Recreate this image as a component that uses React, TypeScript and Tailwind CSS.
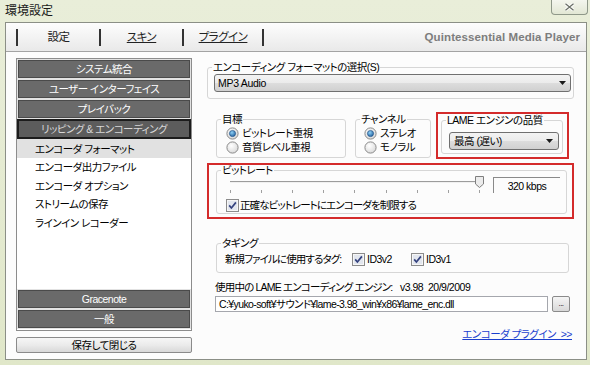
import React from "react";

const Radio = ({ checked }: { checked?: boolean }) => (
  <svg width="13" height="13" viewBox="0 0 13 13" className="shrink-0">
    <defs>
      <radialGradient id={checked ? "rgOn" : "rgOff"} cx="0.4" cy="0.35" r="0.7">
        <stop offset="0" stopColor="#ffffff" />
        <stop offset="1" stopColor="#d8d8d8" />
      </radialGradient>
      <radialGradient id="rdot" cx="0.4" cy="0.35" r="0.7">
        <stop offset="0" stopColor="#8fd0f5" />
        <stop offset="1" stopColor="#1f5f9e" />
      </radialGradient>
    </defs>
    <circle cx="6.5" cy="6.5" r="5.6" fill={checked ? "url(#rgOn)" : "url(#rgOff)"} stroke="#8a8a8a" strokeWidth="1" />
    {checked && <circle cx="6.5" cy="6.5" r="3.1" fill="url(#rdot)" stroke="#1b4a80" strokeWidth="0.6" />}
  </svg>
);

const Check = () => (
  <svg width="13" height="13" viewBox="0 0 13 13" className="shrink-0">
    <rect x="0.5" y="0.5" width="12" height="12" fill="#f6f6f6" stroke="#8c8c8c" />
    <rect x="2" y="2" width="9" height="9" fill="#e2e6ee" />
    <path d="M3.2 6.4 L5.4 9 L9.9 3.4" stroke="#34427e" strokeWidth="1.7" fill="none" />
  </svg>
);

const Arrow = () => (
  <svg width="7" height="4" viewBox="0 0 7 4" className="shrink-0">
    <path d="M0 0 H7 L3.5 4 Z" fill="#1a1a1a" />
  </svg>
);

const NavBtn = ({ label, selected }: { label: string; selected?: boolean }) =>
  selected ? (
    <div className="h-[20px] flex items-center justify-center bg-[#5c5c5c] border-2 border-[#1c1c1c] text-[#d8d8d8]">
      {label}
    </div>
  ) : (
    <div className="h-[20px] flex items-center justify-center bg-[#6a6a6a] border border-[#e2e2e2] shadow-[inset_0_0_0_1px_#4a4a4a] text-white">
      {label}
    </div>
  );

export default function App() {
  const ticks = [0, 31, 62, 93, 124, 156, 187, 218, 249];
  return (
    <div className="w-[590px] h-[365px] overflow-hidden relative whitespace-nowrap bg-[linear-gradient(180deg,#e9eed9_0%,#e0e7c9_100%)] font-['Liberation_Sans','Noto_Sans_CJK_JP',sans-serif] [font-feature-settings:'palt'] text-[10.5px] tracking-[-0.5px] leading-[14px] text-black">
      {/* title bar */}
      <div className="h-[22px] flex items-center pl-[5px] text-[12px] tracking-normal text-[#1a1a1a]">環境設定</div>
      <div className="absolute top-0 right-[2px] w-[37px] h-[15px] border border-t-0 border-[#8f9889] rounded-b-[4px] bg-[linear-gradient(180deg,#f4f6ee,#e2e7d4)] flex items-center justify-center">
        <svg width="11" height="8" viewBox="0 0 11 8">
          <path d="M1.5 0.8 L9.5 7.2 M9.5 0.8 L1.5 7.2" stroke="#ffffff" strokeWidth="3" />
          <path d="M1.5 0.8 L9.5 7.2 M9.5 0.8 L1.5 7.2" stroke="#6a6f66" strokeWidth="1.3" />
        </svg>
      </div>

      {/* main frame */}
      <div className="ml-[5px] w-[582px] h-[338px] border border-[#8b8f86] bg-[#fcfcfc] flex flex-col">
        {/* header */}
        <div className="h-[29px] shrink-0 border-b border-[#a3a3a3] bg-[linear-gradient(180deg,#fdfdfd,#e9e9e9)] flex items-center pl-[10px] pr-[6px]">
          <div className="w-[83px] h-[17px] border-l-2 border-[#333] flex items-center justify-center text-[11.5px] text-[#222]">設定</div>
          <div className="w-[83px] h-[17px] border-l-2 border-[#333] flex items-center justify-center text-[11.5px] text-[#222] underline">スキン</div>
          <div className="w-[82px] h-[17px] border-x-2 border-[#333] flex items-center justify-center text-[11.5px] text-[#222] underline">プラグイン</div>
          <div className="ml-auto text-[11.5px] font-bold text-[#7d7d7d] tracking-[0.1px]">Quintessential Media Player</div>
        </div>

        {/* body */}
        <div className="flex-1 flex pl-[10px]">
          {/* left */}
          <div className="w-[176px] mt-[6px] flex flex-col">
            <div className="h-[273px] border border-[#8c8c8c] bg-white flex flex-col">
              <NavBtn label="システム統合" />
              <NavBtn label="ユーザー インターフェイス" />
              <NavBtn label="プレイバック" />
              <NavBtn label="リッピング & エンコーディング" selected />
              <div className="h-[19px] flex items-center pl-[18px] bg-[#e1e1e1]">エンコーダ フォーマット</div>
              <div className="h-[18.5px] flex items-center pl-[18px]">エンコーダ出力ファイル</div>
              <div className="h-[18.5px] flex items-center pl-[18px]">エンコーダ オプション</div>
              <div className="h-[18.5px] flex items-center pl-[18px]">ストリームの保存</div>
              <div className="h-[18.5px] flex items-center pl-[18px]">ラインイン レコーダー</div>
              <div className="flex-1" />
              <NavBtn label="Gracenote" />
              <NavBtn label="一般" />
              <div className="h-[1px]" />
            </div>
            <div className="mt-[6px] h-[16px] border border-[#8a8a8a] rounded-[2px] bg-[linear-gradient(180deg,#f6f6f6_0%,#ebebeb_50%,#d8d8d8_100%)] flex items-center justify-center">
              保存して閉じる
            </div>
          </div>

          {/* right */}
          <div className="ml-[15px] w-[367px] flex flex-col">
            {/* format */}
            <fieldset className="mt-[8px] w-[367px] border border-[#d6d6d6] rounded-[3px] pl-[4px] pb-[6px]">
              <legend className="px-[1px] leading-[14px]">エンコーディング フォーマットの選択(S)</legend>
              <div className="ml-[2px] w-[357px] h-[18px] border border-[#707070] rounded-[3px] bg-[linear-gradient(180deg,#f3f3f3_0%,#ebebeb_50%,#dddddd_51%,#d0d0d0_100%)] flex items-center pl-[3px] pr-[4px]">
                <span className="flex-1 tracking-[-0.3px]">MP3 Audio</span>
                <Arrow />
              </div>
            </fieldset>

            {/* row 2 */}
            <div className="mt-[13px] ml-[9px] flex items-start">
              <fieldset className="w-[130px] border border-[#d6d6d6] rounded-[3px] pl-[4px] pb-[3px]">
                <legend className="px-[1px] leading-[14px]">目標</legend>
                <div className="h-[14px] flex items-center gap-[3px] ml-[5px]"><Radio checked /><span>ビットレート重視</span></div>
                <div className="h-[14px] flex items-center gap-[3px] ml-[5px]"><Radio /><span>音質レベル重視</span></div>
              </fieldset>
              <fieldset className="ml-[9px] w-[76px] border border-[#d6d6d6] rounded-[3px] pl-[4px] pb-[3px]">
                <legend className="px-[1px] leading-[14px]">チャンネル</legend>
                <div className="h-[14px] flex items-center gap-[3px] ml-[4px]"><Radio checked /><span>ステレオ</span></div>
                <div className="h-[14px] flex items-center gap-[3px] ml-[4px]"><Radio /><span>モノラル</span></div>
              </fieldset>
              <div className="ml-[5px] w-[133px] h-[47px] border-2 border-[#d42b2b]">
                <fieldset className="ml-[3px] w-[122px] border border-[#d6d6d6] rounded-[3px] pl-[4px] pb-[3px]">
                  <legend className="px-[1px] leading-[12px]">LAME エンジンの品質</legend>
                  <div className="mt-[6px] ml-[3px] w-[110px] h-[18px] border border-[#707070] rounded-[3px] bg-[linear-gradient(180deg,#f3f3f3_0%,#ebebeb_50%,#dddddd_51%,#d0d0d0_100%)] flex items-center pl-[4px] pr-[5px]">
                    <span className="flex-1">最高 (遅い)</span>
                    <Arrow />
                  </div>
                </fieldset>
              </div>
            </div>

            {/* bitrate */}
            <div className="mt-[4px] w-[367px] h-[56px] border-2 border-[#d42b2b]">
              <fieldset className="ml-[7px] w-[351px] border border-[#d6d6d6] rounded-[3px] pl-[4px] pb-[1px]">
                <legend className="px-[1px] leading-[10px]">ビットレート</legend>
                <div className="h-[20px] flex items-start">
                  <svg width="256" height="20" viewBox="0 0 256 20" className="ml-[9px] shrink-0">
                    <line x1="0" y1="6.5" x2="252" y2="6.5" stroke="#9c9c9c" />
                    <line x1="0" y1="7.5" x2="252" y2="7.5" stroke="#f0f0f0" />
                    {ticks.map((t) => (
                      <line key={t} x1={t + 0.5} y1="15" x2={t + 0.5} y2="18" stroke="#a0a0a0" />
                    ))}
                    <path d="M245.5 1.5 H253.5 V9 L249.5 12.5 L245.5 9 Z" fill="#ececec" stroke="#7e7e7e" />
                  </svg>
                  <div className="ml-[7px] mt-[2px] w-[67px] h-[16px] border-t border-l border-[#8a8a8a] flex items-center justify-center">320 kbps</div>
                </div>
                <div className="mt-[3px] h-[14px] flex items-center gap-[1px] ml-[5px]"><Check /><span className="tracking-[-0.9px]">正確なビットレートにエンコーダを制限する</span></div>
              </fieldset>
            </div>

            {/* tagging */}
            <fieldset className="mt-[18px] ml-[9px] w-[353px] border border-[#d6d6d6] rounded-[3px] pl-[4px] pb-[6px]">
              <legend className="px-[1px] leading-[12px]">タギング</legend>
              <div className="mt-[3px] h-[14px] flex items-center ml-[4px]">
                <span className="w-[127px] shrink-0 tracking-[-0.9px]">新規ファイルに使用するタグ:</span>
                <div className="w-[59px] flex items-center gap-[2px]"><Check /><span>ID3v2</span></div>
                <div className="flex items-center gap-[2px]"><Check /><span>ID3v1</span></div>
              </div>
            </fieldset>

            {/* engine */}
            <div className="mt-[8px] ml-[8px] h-[12px] flex items-center">
              <span className="w-[185px] shrink-0 tracking-[-0.8px]">使用中の LAME エンコーディング エンジン:</span>
              <span className="whitespace-pre">v3.98  20/9/2009</span>
            </div>
            <div className="mt-[3px] ml-[8px] flex items-center">
              <div className="w-[333px] h-[16px] border border-[#a5a7ad] bg-white flex items-center pl-[3px] tracking-[-0.6px]">
                C:¥yuko-soft¥サウンド¥lame-3.98_win¥x86¥lame_enc.dll
              </div>
              <div className="ml-[4px] w-[18px] h-[16px] border border-[#8a8a8a] rounded-[2px] bg-[linear-gradient(180deg,#f5f5f5,#d8d8d8)] flex items-end justify-center text-[8px] leading-[10px] pb-[2px]">...</div>
            </div>
            <div className="mt-[15px] pr-[2px] flex justify-end">
              <span className="text-[#1b3fce] underline whitespace-pre">エンコーダ プラグイン  &gt;&gt;</span>
            </div>
          </div>
        </div>
      </div>
    </div>
  );
}
